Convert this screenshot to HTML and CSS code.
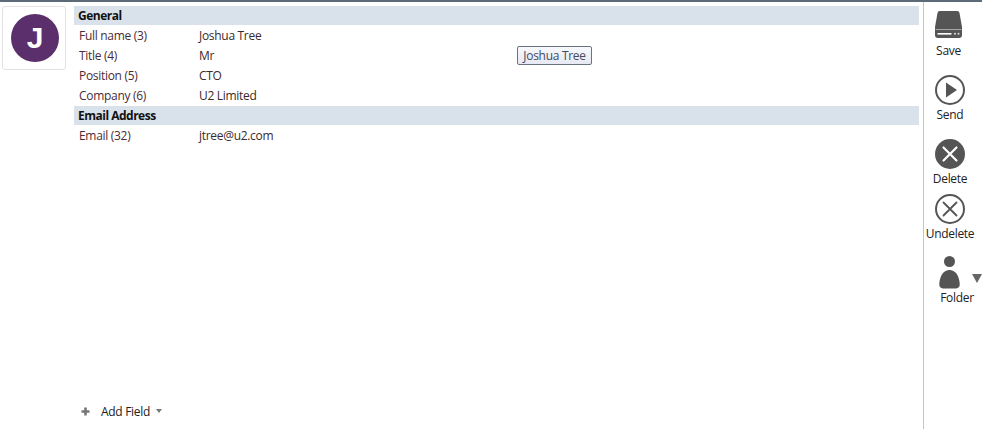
FILE: index.html
```html
<!DOCTYPE html>
<html lang="en">
<head>
<meta charset="utf-8">
<title>Contact</title>
<link rel="stylesheet" href="styles.css">
</head>
<body>
<div class="app">
  <main class="main">
    <div class="content">
      <div class="avatar-card"><div class="avatar">J</div></div>
      <div class="fields">
        <div class="section">General</div>
        <div class="row"><span class="label">Full name (3)</span><span class="value">Joshua Tree</span></div>
        <div class="row"><span class="label">Title (4)</span><span class="value">Mr</span></div>
        <div class="row"><span class="label">Position (5)</span><span class="value">CTO</span></div>
        <div class="row"><span class="label">Company (6)</span><span class="value">U2 Limited</span></div>
        <div class="section">Email Address</div>
        <div class="row"><span class="label">Email (32)</span><span class="value">jtree@u2.com</span></div>
      </div>
    </div>
    <div class="add-field">
      <svg class="plus" width="9" height="9" viewBox="0 0 9 9"><path d="M3.200 0.500h2.600v2.700h2.700v2.600H5.800v2.700H3.200V5.800H0.500V3.200h2.700z" fill="#777"/></svg>
      <span class="add-label">Add Field</span>
      <svg class="caret" width="6" height="4" viewBox="0 0 6 4"><path d="M0 0h6L3 4z" fill="#777"/></svg>
    </div>
    <div class="tooltip">Joshua Tree</div>
  </main>
  <aside class="toolbar">
    <div class="tool tool-save">
      <svg width="27" height="27" viewBox="0 0 27 27"><path d="M4.500 0h18q1.500 0 2 2L27 16v8q0 3-3 3H3q-3 0-3-3v-8L2.500 2q.5-2 2-2z" fill="#555"/><path d="M0.500 18.500h26" stroke="#fff" stroke-width="0.800" opacity=".6"/><rect x="2.500" y="22" width="14" height="1.600" fill="#fff"/><circle cx="20" cy="22.800" r="1" fill="#ddd"/><circle cx="23.500" cy="22.800" r="1" fill="#ddd"/></svg>
      <span>Save</span>
    </div>
    <div class="tool tool-send">
      <svg width="30" height="30" viewBox="0 0 30 30"><circle cx="15" cy="15" r="14" fill="#fff" stroke="#555" stroke-width="2"/><path d="M11 7.500L22 15 11 22.500z" fill="#555"/></svg>
      <span>Send</span>
    </div>
    <div class="tool tool-delete">
      <svg width="30" height="30" viewBox="0 0 30 30"><circle cx="15" cy="15" r="15" fill="#555"/><path d="M8.500 8.500l13 13M21.500 8.500l-13 13" stroke="#fff" stroke-width="2.200" stroke-linecap="round"/></svg>
      <span>Delete</span>
    </div>
    <div class="tool tool-undelete">
      <svg width="30" height="30" viewBox="0 0 30 30"><circle cx="15" cy="15" r="14" fill="#fff" stroke="#555" stroke-width="2"/><path d="M8.500 8.500l13 13M21.500 8.500l-13 13" stroke="#555" stroke-width="1.800" stroke-linecap="round"/></svg>
      <span>Undelete</span>
    </div>
    <div class="tool tool-folder">
      <div class="folder-icon">
        <svg width="21" height="33" viewBox="0 0 21 33"><circle cx="10.500" cy="5.500" r="5.500" fill="#555"/><path d="M4 32.500Q0 32 0.300 27.500C1 19 5 14 10.500 14s9.500 5 10.200 13.500q.3 4.500-3.700 5z" fill="#555"/></svg>
        <svg class="folder-caret" width="10" height="9" viewBox="0 0 10 9"><path d="M0 0h10L5 9z" fill="#666"/></svg>
      </div>
      <span>Folder</span>
    </div>
  </aside>
</div>
</body>
</html>
```
FILE: styles.css
```css
html, body {
  margin: 0;
  padding: 0;
  height: 100%;
  background: #fff;
}
body {
  font-family: "Open Sans", "Noto Sans", sans-serif;
  font-size: 12px;
  letter-spacing: -0.3px;
  color: #3a2a2a;
  overflow: hidden;
}
.app {
  display: flex;
  height: 427px;
  border-top: 2px solid #5d6b78;
}
.main {
  flex: 1;
  display: flex;
  flex-direction: column;
  justify-content: space-between;
  position: relative;
  min-width: 0;
}
.content {
  display: flex;
  padding: 4px 4px 0 2px;
}
.avatar-card {
  width: 64px;
  height: 64px;
  box-sizing: border-box;
  padding-left: 2px;
  flex: none;
  border: 1px solid #e2e2e2;
  border-radius: 3px;
  display: flex;
  align-items: center;
  justify-content: center;
}
.avatar {
  width: 48px;
  height: 48px;
  border-radius: 50%;
  background: #5a2f6b;
  color: #fff;
  font-family: "Liberation Sans", sans-serif;
  font-weight: 700;
  font-size: 30px;
  line-height: 48px;
  text-align: center;
}
.fields {
  flex: 1;
  margin-left: 8px;
}
.section {
  height: 19px;
  line-height: 19px;
  background: #d9e2ea;
  padding-left: 4px;
  font-weight: 700;
  letter-spacing: -0.5px;
  color: #111;
  margin-bottom: 1px;
}
.row {
  display: flex;
  height: 20px;
  line-height: 20px;
}
.label {
  width: 120px;
  padding-left: 5px;
  flex: none;
  color: #4a2c35;
}
.value {
  color: #3a2a2a;
}
.add-field {
  display: flex;
  align-items: center;
  height: 20px;
  padding-left: 81px;
  margin-bottom: 8px;
  color: #222;
}
.add-label {
  margin-left: 11px;
}
.caret {
  margin-left: 6px;
}
.tooltip {
  position: absolute;
  left: 517px;
  top: 44px;
  width: 75px;
  height: 19px;
  box-sizing: border-box;
  border: 1px solid #6b7280;
  border-radius: 2px;
  background: linear-gradient(#f6f8fc, #e6e9f4);
  color: #444a5c;
  line-height: 17px;
  text-align: center;
}
.toolbar {
  width: 52px;
  padding-right: 6px;
  flex: none;
  border-left: 1px solid #c4c4c4;
  display: flex;
  flex-direction: column;
  align-items: center;
  color: #222;
}
.tool {
  display: flex;
  flex-direction: column;
  align-items: center;
  line-height: 16px;
}
.tool svg {
  display: block;
}
.tool-save { margin-top: 9px; margin-left: -3px; }
.tool-save span { margin-top: 5px; }
.tool-send { margin-top: 16px; }
.tool-send span { margin-top: 2px; }
.tool-delete { margin-top: 16px; }
.tool-delete span { margin-top: 2px; }
.tool-undelete { margin-top: 7px; }
.tool-undelete span { margin-top: 2px; }
.tool-folder { margin-top: 14px; margin-left: 14px; }
.tool-folder span { margin-top: 1px; }
.folder-icon {
  position: relative;
  margin-right: 15px;
}
.folder-caret {
  position: absolute;
  left: 33px;
  top: 18px;
}
```
